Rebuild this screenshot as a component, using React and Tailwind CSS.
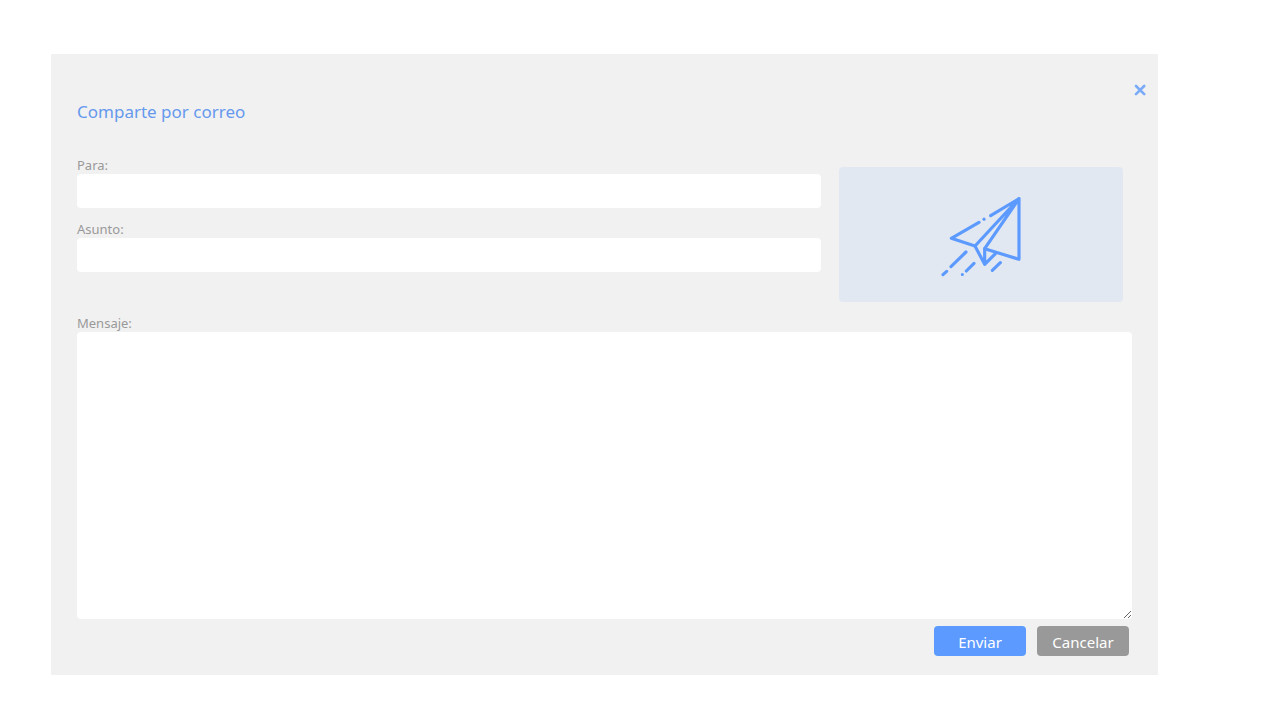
import React, { useState } from 'react'

function CloseIcon() {
  return (
    <svg viewBox="0 0 12 12" className="w-3 h-3" fill="none" stroke="currentColor" strokeWidth="2.6" strokeLinecap="round">
      <path d="M2 2 10.2 10.2M10.2 2 2 10.2" />
    </svg>
  )
}

function PaperPlane() {
  return (
    <svg
      viewBox="9 6 288 288"
      className="w-24 h-24 text-[#5c9aff]"
      fill="none"
      stroke="currentColor"
      strokeWidth="9.5"
      strokeLinecap="round"
      strokeLinejoin="round"
      aria-hidden="true"
    >
      {/* Wings and fold */}
      <path d="M182 92 267 41V223L164 191 267 41 135 183 64 160 147 112" />
      <path d="M135 183 164 238V191M164 238 197 205" />
      <path d="M162 102.500h.1" />
      {/* Trails */}
      <path d="M108 201 63 245M50 259 39 269M132 235 109 258M97 268.500h.1M211 233 187 256" />
    </svg>
  )
}

function Label({ htmlFor, children }) {
  return (
    <label htmlFor={htmlFor} className="block pt-0.5 text-[13px] leading-[18px] text-[#999999]">
      {children}
    </label>
  )
}

function Field({ id, label, value, onChange }) {
  return (
    <div>
      <Label htmlFor={id}>{label}</Label>
      <input
        id={id}
        type="text"
        value={value}
        onChange={e => onChange(e.target.value)}
        className="block w-full h-[34px] px-3 rounded bg-white text-sm text-gray-700 outline-none"
      />
    </div>
  )
}

export default function App() {
  const [to, setTo] = useState('')
  const [subject, setSubject] = useState('')
  const [message, setMessage] = useState('')

  return (
    <div
      className="min-h-screen bg-white pt-[54px] pb-11 pl-[51px] pr-[122px]"
      style={{ fontFamily: '"Noto Sans", "Open Sans", sans-serif' }}
    >
      <form className="bg-[#f1f1f1] pt-[30px] pb-[19px] pl-[26px]" onSubmit={e => e.preventDefault()}>
        <header className="flex items-start justify-between pr-3">
          <h1 className="pt-[14px] text-[17px] leading-7 text-[#6699ee]">Comparte por correo</h1>
          <button type="button" aria-label="Cerrar" className="text-[#7aabf8]">
            <CloseIcon />
          </button>
        </header>

        <div className="pt-7 pr-[26px]">
          <div className="flex gap-[18px] pr-[9px]">
            <div className="flex-1 flex flex-col gap-[10px]">
              <Field id="para" label="Para:" value={to} onChange={setTo} />
              <Field id="asunto" label="Asunto:" value={subject} onChange={setSubject} />
            </div>
            <div className="w-[284px] h-[135px] mt-[13px] rounded bg-[#e1e8f2] flex items-center justify-center">
              <PaperPlane />
            </div>
          </div>

          <div className="mt-[10px]">
            <Label htmlFor="mensaje">Mensaje:</Label>
            <textarea
              id="mensaje"
              value={message}
              onChange={e => setMessage(e.target.value)}
              className="block w-full h-[287px] p-3 rounded bg-white text-sm text-gray-700 outline-none"
            />
          </div>

          <div className="mt-[7px] pr-[3px] flex justify-end gap-[11px] text-[15px] text-white">
            <button type="submit" className="w-[92px] h-[30px] pt-0.5 rounded bg-[#5c9aff]">
              Enviar
            </button>
            <button type="button" className="w-[92px] h-[30px] pt-0.5 rounded bg-[#999999]">
              Cancelar
            </button>
          </div>
        </div>
      </form>
    </div>
  )
}
